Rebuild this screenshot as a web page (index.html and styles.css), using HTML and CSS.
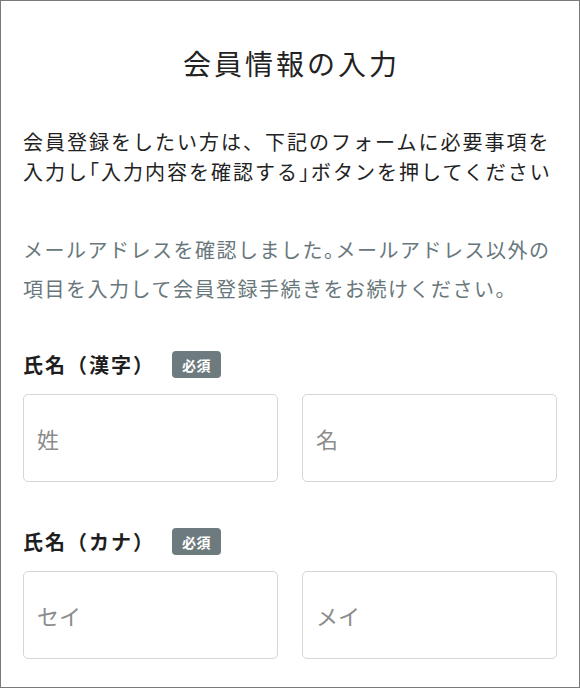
FILE: index.html
```html
<!DOCTYPE html>
<html lang="ja">
<head>
<meta charset="utf-8">
<title>会員情報の入力</title>
<link rel="stylesheet" href="styles.css">
</head>
<body>
<div class="page">
  <h1 class="title">会員情報の入力</h1>
  <p class="lead">会員登録をしたい方は、下記のフォームに必要事項を入力し<span class="half">「</span>入力内容を確認する<span class="half">」</span>ボタンを押してください</p>
  <p class="notice">メールアドレスを確認しました<span class="half">。</span>メールアドレス以外の項目を入力して会員登録手続きをお続けください。</p>
  <div class="field">
    <div class="label-row"><span class="label">氏名（漢字）</span><span class="badge">必須</span></div>
    <div class="inputs">
      <input class="text-input" type="text" placeholder="姓">
      <input class="text-input" type="text" placeholder="名">
    </div>
  </div>
  <div class="field">
    <div class="label-row"><span class="label">氏名（カナ）</span><span class="badge">必須</span></div>
    <div class="inputs">
      <input class="text-input" type="text" placeholder="セイ">
      <input class="text-input" type="text" placeholder="メイ">
    </div>
  </div>
</div>
</body>
</html>
```

FILE: styles.css
```css
* { box-sizing: border-box; }
html, body { margin: 0; padding: 0; background: #fff; }
body {
  font-family: "Noto Sans CJK JP", "Noto Sans", sans-serif;
  color: #222;
}
.page {
  width: 580px;
  height: 688px;
  border: 1px solid #7a7a7a;
  padding: 0 22px;
  overflow: hidden;
}
.title {
  margin: 42px 0 0;
  font-size: 28px;
  line-height: 40px;
  font-weight: 400;
  text-align: center;
  letter-spacing: 3px;
  text-indent: 3px;
  color: #222;
}
.lead {
  margin: 44px 0 0;
  font-size: 20px;
  line-height: 30px;
  letter-spacing: 2px;
  color: #222;
}
.notice {
  margin: 43px 0 0;
  font-size: 20px;
  line-height: 39px;
  letter-spacing: 1.5px;
  color: #68777b;
}
.half { font-feature-settings: "halt" 1; }
.field { margin-top: 43px; }
.field + .field { margin-top: 46px; }
.label-row {
  display: flex;
  align-items: center;
  gap: 17px;
  height: 27px;
}
.label {
  font-size: 20px;
  font-weight: 700;
  letter-spacing: 2px;
  color: #1e1e1e;
}
.badge {
  display: inline-flex;
  align-items: center;
  justify-content: center;
  width: 49px;
  height: 27px;
  border-radius: 4px;
  background: #6e7b7e;
  color: #fff;
  font-size: 14px;
  font-weight: 700;
  letter-spacing: 0.5px;
}
.inputs {
  display: grid;
  grid-template-columns: 1fr 1fr;
  gap: 24px;
  margin-top: 16px;
}
.text-input {
  display: block;
  width: 100%;
  height: 88px;
  border: 1.5px solid #d6d6d6;
  border-radius: 5px;
  padding: 0 13px;
  font-family: inherit;
  font-size: 22px;
  color: #222;
  background: #fff;
  outline: none;
}
.text-input::placeholder { color: #8c8c8c; }
```
